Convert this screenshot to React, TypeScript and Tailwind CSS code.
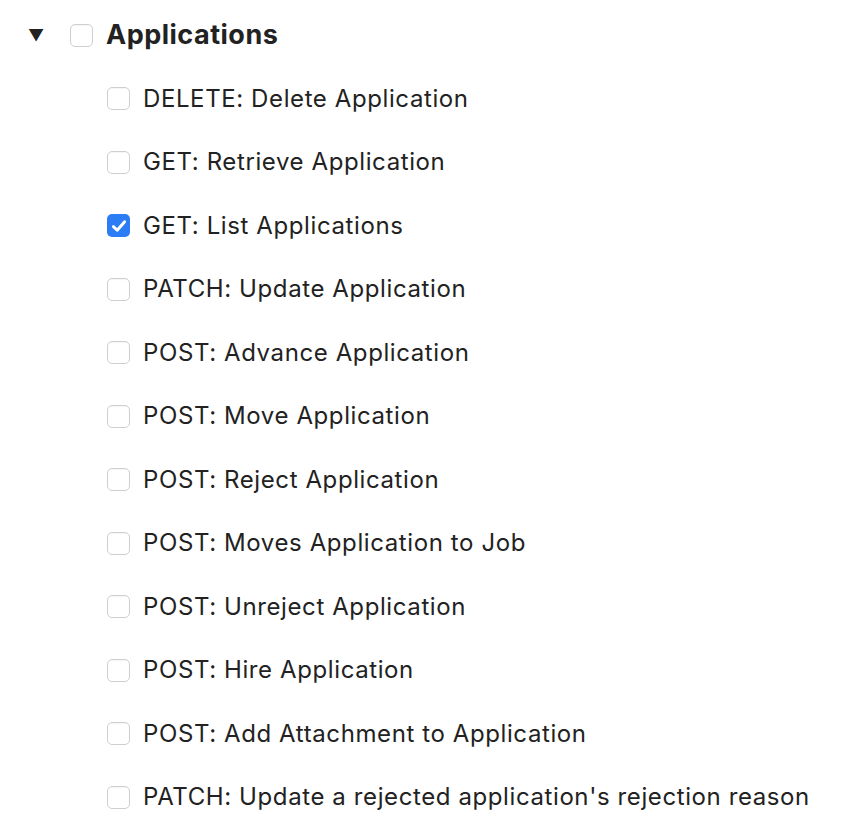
import React from 'react';

const items: { label: string; checked?: boolean }[] = [
  { label: 'DELETE: Delete Application' },
  { label: 'GET: Retrieve Application' },
  { label: 'GET: List Applications', checked: true },
  { label: 'PATCH: Update Application' },
  { label: 'POST: Advance Application' },
  { label: 'POST: Move Application' },
  { label: 'POST: Reject Application' },
  { label: 'POST: Moves Application to Job' },
  { label: 'POST: Unreject Application' },
  { label: 'POST: Hire Application' },
  { label: 'POST: Add Attachment to Application' },
  { label: "PATCH: Update a rejected application's rejection reason" },
];

const Box: React.FC<{ checked?: boolean }> = ({ checked }) =>
  checked ? (
    <span className="flex h-[23px] w-[23px] shrink-0 items-center justify-center rounded-[5px] bg-[#2b7cf5]">
      <svg viewBox="0 0 16 16" className="h-[18px] w-[18px]" fill="none">
        <path d="M3 8.6 6.4 11.8 13 4.2" stroke="white" strokeWidth="2.6" strokeLinecap="round" strokeLinejoin="round" />
      </svg>
    </span>
  ) : (
    <span className="block h-[23px] w-[23px] shrink-0 rounded-[5px] border border-[#cfcfcf] bg-white shadow-[inset_0_1px_1px_rgba(0,0,0,0.04)]" />
  );

export default function App() {
  return (
    <div className="min-h-screen bg-white text-[#222] font-['Inter',sans-serif]">
      <div className="pl-[28px] pt-[23px]">
        <div className="flex h-[24px] items-center">
          <span className="w-[42px] text-[16px] leading-none text-[#222]">▼</span>
          <Box />
          <span className="ml-[13px] text-[27px] font-bold tracking-[0.5px]">Applications</span>
        </div>
        <ul className="mt-[40px] flex flex-col gap-[40.5px] pl-[79px]">
          {items.map((it) => (
            <li key={it.label} className="flex h-[23px] items-center">
              <Box checked={it.checked} />
              <span className="ml-[13px] whitespace-nowrap text-[24px] tracking-[0.6px]">{it.label}</span>
            </li>
          ))}
        </ul>
      </div>
    </div>
  );
}
